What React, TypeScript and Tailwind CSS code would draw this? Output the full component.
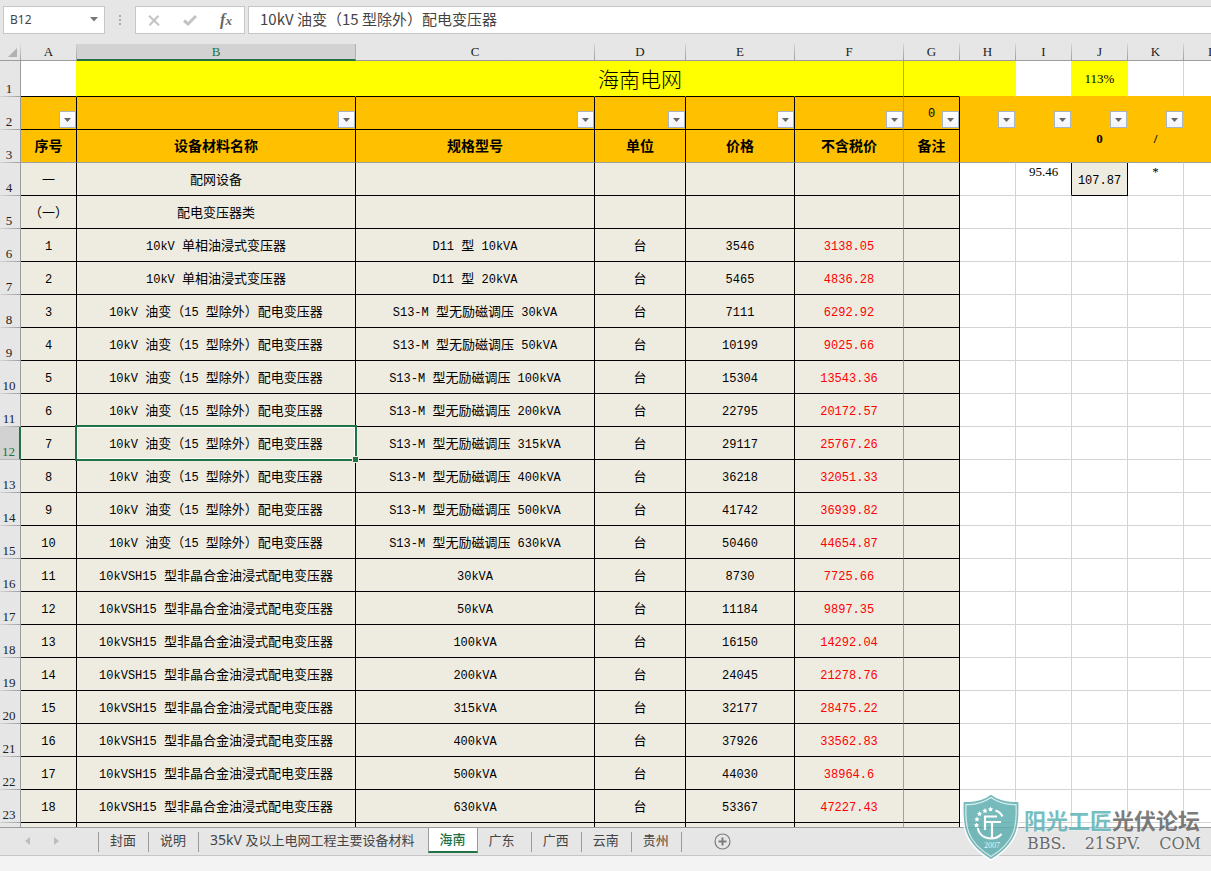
import type { ReactNode } from "react";

type Item = [string, string, string, string, string, string];

const OIL = "10kV 油变（15 型除外）配电变压器";
const AMORPHOUS = "10kVSH15 型非晶合金油浸式配电变压器";

const items: Item[] = [
  ["一", "配网设备", "", "", "", ""],
  ["（一）", "配电变压器类", "", "", "", ""],
  ["1", "10kV 单相油浸式变压器", "D11 型 10kVA", "台", "3546", "3138.05"],
  ["2", "10kV 单相油浸式变压器", "D11 型 20kVA", "台", "5465", "4836.28"],
  ["3", OIL, "S13-M 型无励磁调压 30kVA", "台", "7111", "6292.92"],
  ["4", OIL, "S13-M 型无励磁调压 50kVA", "台", "10199", "9025.66"],
  ["5", OIL, "S13-M 型无励磁调压 100kVA", "台", "15304", "13543.36"],
  ["6", OIL, "S13-M 型无励磁调压 200kVA", "台", "22795", "20172.57"],
  ["7", OIL, "S13-M 型无励磁调压 315kVA", "台", "29117", "25767.26"],
  ["8", OIL, "S13-M 型无励磁调压 400kVA", "台", "36218", "32051.33"],
  ["9", OIL, "S13-M 型无励磁调压 500kVA", "台", "41742", "36939.82"],
  ["10", OIL, "S13-M 型无励磁调压 630kVA", "台", "50460", "44654.87"],
  ["11", AMORPHOUS, "30kVA", "台", "8730", "7725.66"],
  ["12", AMORPHOUS, "50kVA", "台", "11184", "9897.35"],
  ["13", AMORPHOUS, "100kVA", "台", "16150", "14292.04"],
  ["14", AMORPHOUS, "200kVA", "台", "24045", "21278.76"],
  ["15", AMORPHOUS, "315kVA", "台", "32177", "28475.22"],
  ["16", AMORPHOUS, "400kVA", "台", "37926", "33562.83"],
  ["17", AMORPHOUS, "500kVA", "台", "44030", "38964.6"],
  ["18", AMORPHOUS, "630kVA", "台", "53367", "47227.43"],
  ["", "", "", "", "", ""],
];

const columns = ["A", "B", "C", "D", "E", "F", "G", "H", "I", "J", "K", "L"];
const headings = ["序号", "设备材料名称", "规格型号", "单位", "价格", "不含税价", "备注"];
const sheets = ["封面", "说明", "35kV 及以上电网工程主要设备材料", "海南", "广东", "广西", "云南", "贵州"];

const SERIF = "font-['Liberation_Serif','Noto_Sans_CJK_SC',serif]";
const UI = "font-['Noto_Sans','Noto_Sans_CJK_SC',sans-serif]";
const MONO = "font-['Liberation_Mono',monospace] text-[12px]";

/* Sets Latin runs in their own face and size beside the Chinese text. */
function Mixed({ text, latin }: { text: string; latin: string }) {
  return (
    <span className="whitespace-pre">
      {text.split(/([\x20-\x7e]+)/).map((run, i) =>
        i % 2 ? (
          <span key={i} className={latin}>
            {run}
          </span>
        ) : (
          run
        ),
      )}
    </span>
  );
}

function RowHead({ n, active }: { n?: number; active?: boolean }) {
  return (
    <th
      scope="row"
      className={
        "p-0 pr-[2px] text-center align-bottom text-[13px] leading-[15px] font-normal " +
        (active
          ? "border-r-2 border-b border-r-[#217346] border-b-[#b8b8b8] bg-[#d2d2d2] text-[#217346]"
          : "border-r border-b bg-[#e6e6e6] text-[#222] [border-image:linear-gradient(to_right,#d8d8d8,#9b9b9b)_1]")
      }
    >
      {n}
    </th>
  );
}

function FilterButton({ column }: { column: string }) {
  return (
    <button
      type="button"
      aria-label={`Filter column ${column}`}
      className="absolute right-0 bottom-px flex size-[17px] items-center justify-center border border-[#a9b4c2] bg-linear-to-b from-white to-[#f0f3f7]"
    >
      <svg width="7" height="4" viewBox="0 0 7 4">
        <path d="M0 0h7L3.5 4z" fill="#666" />
      </svg>
    </button>
  );
}

function Cell({ className, children }: { className: string; children?: ReactNode }) {
  return <td className={"border-r border-b p-0 text-center last:border-r-0 " + className}>{children}</td>;
}

function edge(i: number) {
  return i === 5 ? "border-r-[#a0a0a0]" : "border-r-black";
}

function FormulaBar() {
  return (
    <header className={`flex h-[44px] shrink-0 items-start bg-[#e6e6e6] pt-[6px] pl-[3px] ${UI}`}>
      <div className="flex h-[28px] w-[102px] items-center border border-[#c6c6c6] bg-white">
        <input
          aria-label="Name box"
          defaultValue="B12"
          className="min-w-0 flex-1 bg-transparent pl-[6px] text-[12px] text-[#444] outline-none"
        />
        <button type="button" aria-label="Open name list" className="flex h-full w-5 items-center justify-center">
          <svg width="8" height="5" viewBox="0 0 8 5" className="mb-[2px]">
            <path d="M0 0h8L4 4.5z" fill="#777" />
          </svg>
        </button>
      </div>
      <svg width="30" height="28" viewBox="0 0 30 28" aria-hidden="true">
        <path d="M14 9h2v2h-2zM14 13h2v2h-2zM14 17h2v2h-2z" fill="#ababab" />
      </svg>
      <div className="flex h-[28px] w-[110px] items-center border border-[#c6c6c6] bg-white">
        <button type="button" aria-label="Cancel" className="flex h-full flex-1 items-center justify-center">
          <svg width="12" height="11" viewBox="0 0 12 11" fill="none" stroke="#c3c3c3" strokeWidth="2">
            <path d="M1 .7 11 10.300M10.500.7 1.500 10.300" />
          </svg>
        </button>
        <button type="button" aria-label="Enter" className="flex h-full flex-1 items-center justify-center">
          <svg width="14" height="11" viewBox="0 0 14 11" fill="none" stroke="#c3c3c3" strokeWidth="3">
            <path d="M1 5.500l4 3.500L13 1" />
          </svg>
        </button>
        <button
          type="button"
          aria-label="Insert function"
          className="h-full flex-1 font-['Liberation_Serif',serif] text-[16px] leading-[24px] font-bold text-[#666] italic"
        >
          f<span className="text-[13px]">x</span>
        </button>
      </div>
      <input
        aria-label="Formula"
        defaultValue={OIL}
        className="ml-[3px] h-[28px] min-w-0 flex-1 border border-r-0 border-[#c6c6c6] bg-white pb-[3px] pl-[11px] font-['Noto_Sans_CJK_SC',sans-serif] text-[15px] text-[#444] outline-none"
      />
    </header>
  );
}

function Sheet() {
  return (
    <table className={`w-full table-fixed border-separate border-spacing-0 text-black ${SERIF}`}>
      <colgroup>
        <col className="w-[21px]" />
        <col className="w-[56px]" />
        <col className="w-[279px]" />
        <col className="w-[239px]" />
        <col className="w-[91px]" />
        <col className="w-[109px]" />
        <col className="w-[109px]" />
        <col className="w-[56px]" />
        <col className="w-[56px]" />
        <col className="w-[56px]" />
        <col className="w-[56px]" />
        <col className="w-[56px]" />
        <col />
      </colgroup>
      <thead>
        <tr className="h-[17px] text-[13px] leading-[16px]">
          <th
            aria-label="Select all"
            className="border-r border-b bg-[#e6e6e6] p-0 [border-image:linear-gradient(to_bottom,#e6e6e6,#9b9b9b)_1]"
          >
            <svg width="9" height="9" viewBox="0 0 9 9" className="ml-2">
              <path d="M9 0v9H0z" fill="#b1b1b1" />
            </svg>
          </th>
          {columns.map((c) => (
            <th
              key={c}
              scope="col"
              className={
                "overflow-hidden p-0 font-medium last:border-r-0 " +
                (c === "B"
                  ? "border-r border-b-2 border-r-[#b0b0b0] border-b-[#217346] bg-[#d2d2d2] leading-[15px] text-[#217346]"
                  : "border-r border-b bg-[#e6e6e6] text-[#222] [border-image:linear-gradient(to_bottom,#d8d8d8,#9b9b9b)_1]")
              }
            >
              {c === "L" ? <span className="block w-14">{c}</span> : c}
            </th>
          ))}
        </tr>
      </thead>
      <tbody>
        <tr className="h-[36px]">
          <RowHead n={1} />
          <Cell className="border-r-[#ff0] border-b-black bg-white" />
          <Cell className="border-r-[#ff0] border-b-black bg-[#ff0]" />
          <Cell className="border-r-[#ff0] border-b-black bg-[#ff0]" />
          <Cell className="border-r-[#ff0] border-b-black bg-[#ff0] pt-[2px] text-[21px] leading-[30px] font-light whitespace-nowrap">
            海南电网
          </Cell>
          <Cell className="border-r-[#ff0] border-b-black bg-[#ff0]" />
          <Cell className="border-r-[#a0a0a0] border-b-black bg-[#ff0]" />
          <Cell className="border-r-[#ff0] border-b-black bg-[#ff0]" />
          <Cell className="border-r-[#ff0] border-b-[#ffc000] bg-[#ff0]" />
          <Cell className="border-r-[#ff0] border-b-[#ffc000] bg-white" />
          <Cell className="border-r-[#ff0] border-b-[#ffc000] bg-[#ff0] text-[13px] leading-[16px]">113%</Cell>
          <Cell className="border-r-[#d4d4d4] border-b-[#ffc000] bg-white" />
          <Cell className="border-b-[#ffc000] bg-white" />
        </tr>
        <tr className="h-[33px]">
          <RowHead n={2} />
          {columns.map((c, i) => (
            <Cell
              key={c}
              className={
                "relative bg-[#ffc000] text-[13px] leading-[16px] " +
                (i < 7 ? "border-b-black " + edge(i) : "border-[#ffc000]")
              }
            >
              {c === "G" && <span className={MONO}>0</span>}
              {c !== "L" && <FilterButton column={c} />}
            </Cell>
          ))}
        </tr>
        <tr className="h-[33px]">
          <RowHead n={3} />
          {headings.map((h, i) => (
            <Cell
              key={h}
              className={"border-b-[#a0a0a0] bg-[#ffc000] pt-[2px] text-[14px] leading-[18px] font-bold " + edge(i)}
            >
              {h}
            </Cell>
          ))}
          {["", "", "0", "/", ""].map((v, i) => (
            <Cell
              key={i}
              className="border-r-[#ffc000] border-b-[#a0a0a0] bg-[#ffc000] align-top text-[13px] leading-[18px] font-bold"
            >
              {v}
            </Cell>
          ))}
        </tr>
        {items.map((row, r) => {
          const n = r + 4;
          return (
            <tr key={n} className="h-[33px] text-[13px] leading-[18px]">
              <RowHead n={n < 24 ? n : undefined} active={n === 12} />
              {[...row, ""].map((v, i) => (
                <Cell
                  key={i}
                  className={
                    "relative border-b-black bg-[#eeece1] pt-[2px] " + edge(i) + (i === 5 ? " text-[#f00]" : "")
                  }
                >
                  <Mixed text={v} latin={MONO} />
                  {n === 12 && i === 1 && (
                    <span className="pointer-events-none absolute -inset-[2px] z-10 border-2 border-[#217346] shadow-[inset_0_0_0_1px_#fff]">
                      <span className="absolute -right-[4px] -bottom-[4px] size-[7px] border border-[#eeece1] bg-[#217346]" />
                    </span>
                  )}
                </Cell>
              ))}
              {["", "95.46", "107.87", "*", ""].map((v, i) => {
                if (n === 4 && i === 2)
                  return (
                    <Cell key={i} className="border-black bg-[#eeece1] pt-[2px]">
                      <span className={MONO}>{v}</span>
                    </Cell>
                  );
                return (
                  <Cell
                    key={i}
                    className={
                      "border-b-[#d4d4d4] bg-white align-top " +
                      (n === 4 && i === 1 ? "border-r-black" : "border-r-[#d4d4d4]")
                    }
                  >
                    {n === 4 ? v : ""}
                  </Cell>
                );
              })}
            </tr>
          );
        })}
      </tbody>
    </table>
  );
}

function SheetTabs() {
  return (
    <nav
      aria-label="Sheets"
      className={`flex h-[29px] shrink-0 items-start border-t border-b border-t-[#9b9b9b] border-b-[#c6c6c6] bg-[#e6e6e6] text-[13px] text-[#444] ${UI}`}
    >
      <div className="flex h-[25px] w-[98px] items-center gap-[19px] pl-[22px]">
        <button type="button" aria-label="Previous sheet" className="flex w-[10px] justify-center">
          <svg width="5" height="8" viewBox="0 0 5 8">
            <path d="M5 0v8L0 4z" fill="#bdbdbd" />
          </svg>
        </button>
        <button type="button" aria-label="Next sheet" className="flex w-[10px] justify-center">
          <svg width="5" height="8" viewBox="0 0 5 8">
            <path d="M0 0v8l5-4z" fill="#bdbdbd" />
          </svg>
        </button>
      </div>
      {sheets.map((s, i) =>
        s === "海南" ? (
          <button
            key={s}
            type="button"
            aria-current="page"
            className="h-[25px] border-x border-b-2 border-x-[#9b9b9b] border-b-[#217346] bg-white px-[11px] leading-[23px] font-medium text-[#217346]"
          >
            {s}
          </button>
        ) : (
          <button
            key={s}
            type="button"
            className={
              "mt-[4px] h-[20px] pb-1 pl-[11px] leading-[16px] " +
              (i === 4 ? "pr-4" : "border-l border-[#9b9b9b] " + (i === 2 ? "pr-[13px]" : "pr-3"))
            }
          >
            <Mixed text={s} latin="text-[14px]" />
          </button>
        ),
      )}
      <span className="mt-[4px] h-[20px] w-px bg-[#9b9b9b]" />
      <button type="button" aria-label="New sheet" className="mt-[5px] ml-8">
        <svg width="17" height="17" viewBox="0 0 17 17" fill="none" stroke="#7d7d7d">
          <circle cx="8.500" cy="8.500" r="7.500" strokeWidth="1.200" />
          <path d="M8.500 4.500v8M4.500 8.500h8" strokeWidth="2" />
        </svg>
      </button>
    </nav>
  );
}

function Watermark() {
  const stars = [
    [29.6, 16],
    [24, 17.6],
    [18.5, 20.5],
    [16, 26],
    [15.5, 32],
  ];
  return (
    <div className="pointer-events-none absolute right-[10px] bottom-[10px] flex items-start gap-[3px] opacity-85">
      <svg width="60" height="68" viewBox="0 0 60 68" fill="none">
        <path
          d="M30 1C22 7 12 9 2 8c-1 22-1 42 28 59C59 50 59 30 58 8 48 9 38 7 30 1z"
          fill="#5faeb1"
          stroke="#fff"
          strokeWidth="1.500"
        />
        <path
          d="M30 4.500C22 10 14 12 5 11.500c-1 20 0 37 25 52C55 48.500 56 31.500 55 11.500 46 12 38 10 30 4.500z"
          stroke="#d5eaea"
          strokeWidth="1.200"
        />
        <path
          d="M34.500 17.500c3 .8 5.500 3 7 6M16.700 35c1.300 6.500 6.500 10.500 13.300 10.500 4.500 0 8-1.500 10.500-4.500"
          stroke="#fff"
          strokeWidth="2"
        />
        <path d="M24 37V23.500h12M24 29h16M31 29v16" stroke="#fff" strokeWidth="2.200" />
        {stars.map(([x, y]) => (
          <path
            key={x}
            transform={`translate(${x} ${y})`}
            fill="#fff"
            d="M0-2.600.8-.8l1.900.2L1.300.7l.4 1.900L0 1.700l-1.700.9.400-1.900-1.400-1.300 1.900-.2z"
          />
        ))}
        <text x="31" y="55" textAnchor="middle" fill="#e6f3f3" fontSize="8" fontFamily="Liberation Serif, serif">
          2007
        </text>
      </svg>
      <div className="w-[177px] pt-[10px]">
        <div className="font-['Noto_Sans_CJK_SC',sans-serif] text-[22px] leading-[32px] font-bold whitespace-nowrap text-[#666] [text-shadow:0_0_2px_#fff]">
          <span className="text-[#5fb4b7]">阳光工匠</span>光伏论坛
        </div>
        <div className="flex justify-between pl-[3px] font-['DejaVu_Serif',serif] text-[16px] leading-[18px] text-[#555] [text-shadow:0_0_2px_#fff]">
          <span>BBS.</span>
          <span>21SPV.</span>
          <span>COM</span>
        </div>
      </div>
    </div>
  );
}

export default function App() {
  return (
    <div className="relative flex h-screen flex-col overflow-hidden bg-[#f3f3f3]">
      <FormulaBar />
      <main className="min-h-0 flex-1 overflow-hidden bg-white">
        <Sheet />
      </main>
      <SheetTabs />
      <footer className="h-[15px] shrink-0 bg-[#f3f3f3]" />
      <Watermark />
    </div>
  );
}
